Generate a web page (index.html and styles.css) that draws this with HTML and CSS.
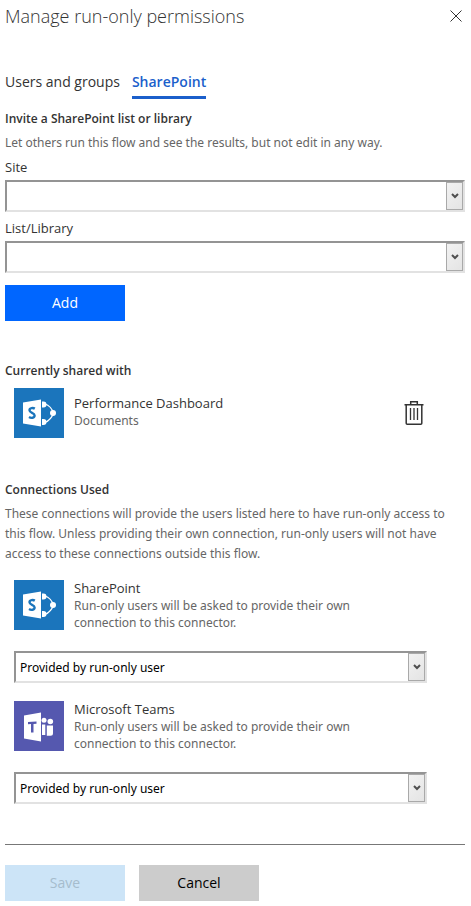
FILE: index.html
```html
<!DOCTYPE html>
<html lang="en">
<head>
<meta charset="utf-8">
<meta name="viewport" content="width=device-width, initial-scale=1">
<title>Manage run-only permissions</title>
<link rel="stylesheet" href="styles.css">
</head>
<body>
<svg class="symbols" aria-hidden="true">
  <symbol id="sharepoint" viewBox="0 0 50 50">
    <path fill="none" stroke="#fff" stroke-width="1.2" d="M31 16q6 2 8.500 9-2.500 7-8.500 9.500M31 16"/>
    <path fill="#fff" d="M9 14.500 27 11.500v27L9 35.500z"/>
    <path fill="#fff" d="M28 13.500h1.500a3 3 0 0 1 0 6H28zM28 31h1.500a3 3 0 0 1 0 6H28z"/>
    <circle cx="39" cy="25" r="3" fill="#fff"/>
    <path fill="none" stroke="#1b75bc" stroke-width="2.400" d="M20.800 20.600c-1.500-.9-5.300-1-5.300 1.700 0 3 5.100 2.200 5.100 5.200 0 2.800-3.800 2.700-5.600 1.600"/>
  </symbol>
  <symbol id="teams" viewBox="0 0 50 50">
    <path fill="#fff" d="M10 14.500 27 11.500v29L10 37.500z"/>
    <path fill="#5558af" d="M14 21l8.500-.6v2.400l-3 .2v8.500H17v-8.400l-3 .2z"/>
    <circle cx="30" cy="19.300" r="2.500" fill="#fff"/>
    <circle cx="36.300" cy="20.500" r="2.800" fill="#fff"/>
    <path fill="#fff" d="M28 23.500h3.300V34H28zM32.800 24.500H39v7.800a2.500 2.500 0 0 1-2.500 2.500h-3.700z"/>
  </symbol>
  <symbol id="chevron" viewBox="0 0 8 6">
    <path fill="none" stroke="#4f4f4f" stroke-width="2" d="M1 1l3 3 3-3"/>
  </symbol>
</svg>
<main class="panel">
  <header class="header">
    <h1>Manage run-only permissions</h1>
    <button class="icon-button" type="button" aria-label="Close">
      <svg class="close" viewBox="0 0 12 12"><path fill="none" stroke="#333" d="M.5.5l11 11M11.500.5l-11 11"/></svg>
    </button>
  </header>
  <nav class="tabs">
    <a href="#users">Users and groups</a>
    <a class="active" href="#sharepoint-tab" aria-current="page">SharePoint</a>
  </nav>
  <form>
    <section class="invite">
      <h2>Invite a SharePoint list or library</h2>
      <p class="hint">Let others run this flow and see the results, but not edit in any way.</p>
      <label for="site">Site</label>
      <div class="select">
        <select id="site"><option></option></select>
        <span class="arrow"><svg><use href="#chevron"/></svg></span>
      </div>
      <label for="list">List/Library</label>
      <div class="select">
        <select id="list"><option></option></select>
        <span class="arrow"><svg><use href="#chevron"/></svg></span>
      </div>
      <button class="button primary" type="button">Add</button>
    </section>
    <section class="shared">
      <h2>Currently shared with</h2>
      <div class="item">
        <svg class="logo sharepoint"><use href="#sharepoint"/></svg>
        <div class="details">
          <h3>Performance Dashboard</h3>
          <p>Documents</p>
        </div>
        <button class="icon-button" type="button" aria-label="Delete">
          <svg class="trash" viewBox="0 0 20 26"><g fill="none" stroke="#333"><path stroke-width="1.500" d="M.5 4.700h19M6.700 4V1.700h6.600V4M2.200 5v18.300a1 1 0 0 0 1 1h13.600a1 1 0 0 0 1-1V5"/><path stroke-width="1.300" d="M6.500 8v12M10 8v12M13.500 8v12"/></g></svg>
        </button>
      </div>
    </section>
    <section class="connections">
      <h2>Connections Used</h2>
      <p class="hint">These connections will provide the users listed here to have run-only access to this flow. Unless providing their own connection, run-only users will not have access to these connections outside this flow.</p>
      <div class="connection">
        <div class="item">
          <svg class="logo sharepoint"><use href="#sharepoint"/></svg>
          <div class="details">
            <h3>SharePoint</h3>
            <p>Run-only users will be asked to provide their own connection to this connector.</p>
          </div>
        </div>
        <div class="select">
          <select aria-label="SharePoint connection"><option>Provided by run-only user</option></select>
          <span class="arrow"><svg><use href="#chevron"/></svg></span>
        </div>
      </div>
      <div class="connection">
        <div class="item">
          <svg class="logo teams"><use href="#teams"/></svg>
          <div class="details">
            <h3>Microsoft Teams</h3>
            <p>Run-only users will be asked to provide their own connection to this connector.</p>
          </div>
        </div>
        <div class="select">
          <select aria-label="Microsoft Teams connection"><option>Provided by run-only user</option></select>
          <span class="arrow"><svg><use href="#chevron"/></svg></span>
        </div>
      </div>
    </section>
    <footer class="footer">
      <button class="button save" type="submit" disabled>Save</button>
      <button class="button cancel" type="button">Cancel</button>
    </footer>
  </form>
</main>
</body>
</html>
```
FILE: styles.css
```css
* {
  box-sizing: border-box;
}

body {
  margin: 0;
  background: #fff;
  color: #333;
  font: 12px/20px "Open Sans", "Segoe UI", sans-serif;
}

h1, h2, h3, p {
  margin: 0;
}

p, select {
  font-family: "Noto Sans", "Segoe UI", sans-serif;
}

.symbols {
  display: none;
}

.panel {
  padding: 0 6px 5px 5px;
}

.header {
  display: flex;
  justify-content: space-between;
  align-items: center;
}

h1 {
  font-size: 18px;
  font-weight: 300;
  line-height: 32px;
}

h2 {
  font-size: 12px;
  font-weight: 600;
  line-height: 20px;
}

h3 {
  margin-bottom: 1px;
  font-size: 13px;
  font-weight: 400;
  line-height: 16px;
}

.icon-button {
  display: flex;
  align-items: center;
  padding: 0 3px;
  border: 0;
  background: none;
}

.close {
  width: 12px;
  height: 12px;
}

.tabs {
  display: flex;
  gap: 12px;
  margin: 38px 0 10px;
}

.tabs a {
  padding-bottom: 2px;
  border-bottom: 3px solid transparent;
  color: #333;
  font-size: 14px;
  line-height: 24px;
  text-decoration: none;
}

.tabs .active {
  border-color: #1b5fcb;
  color: #1b5fcb;
  font-weight: 600;
}

.hint {
  margin: 4px 0;
  color: #666;
}

label {
  display: block;
  margin-bottom: 3px;
  font-size: 13px;
}

.select {
  position: relative;
  margin-bottom: 6px;
}

select {
  display: block;
  width: 100%;
  height: 32px;
  padding: 0 20px 0 4px;
  border: 2px solid;
  border-color: #949494 #e2e2e2 #e2e2e2 #949494;
  border-radius: 0;
  background: #fff;
  color: #000;
  font-size: 12px;
  appearance: none;
}

.arrow {
  position: absolute;
  top: 2px;
  right: 2px;
  bottom: 2px;
  display: grid;
  place-items: center;
  width: 17px;
  border: 1px solid #a9a9a9;
  background: linear-gradient(135deg, #f2f2f2, #e4e4e4);
  pointer-events: none;
}

.arrow svg {
  width: 8px;
  height: 6px;
}

.button {
  width: 120px;
  height: 36px;
  border: 0;
  font: inherit;
  font-size: 14px;
}

.primary {
  display: block;
  margin-top: 12px;
  background: #0066ff;
  color: #fff;
}

.shared {
  margin-top: 40px;
}

.shared .item {
  margin: 7px 38px 0 9px;
}

.item {
  display: flex;
  gap: 10px;
}

.logo {
  flex: none;
  width: 50px;
  height: 50px;
}

.sharepoint {
  background: #1b75bc;
}

.teams {
  background: #5558af;
}

.details {
  flex: 1;
}

.details p {
  color: #666;
  line-height: 17px;
}

.shared .details {
  padding-top: 7px;
}

.trash {
  width: 20px;
  height: 26px;
}

.connections {
  margin-top: 42px;
}

.connection {
  margin: 16px 38px 18px 9px;
}

.connection .details {
  max-width: 300px;
}

.connection .select {
  margin: 20px 0 0;
}

.footer {
  display: flex;
  gap: 14px;
  margin-top: 40px;
  padding-top: 20px;
  border-top: 1px solid #777;
}

.save {
  background: #cce4f7;
  color: #a6bccd;
}

.cancel {
  background: #ccc;
  color: #000;
}
```
